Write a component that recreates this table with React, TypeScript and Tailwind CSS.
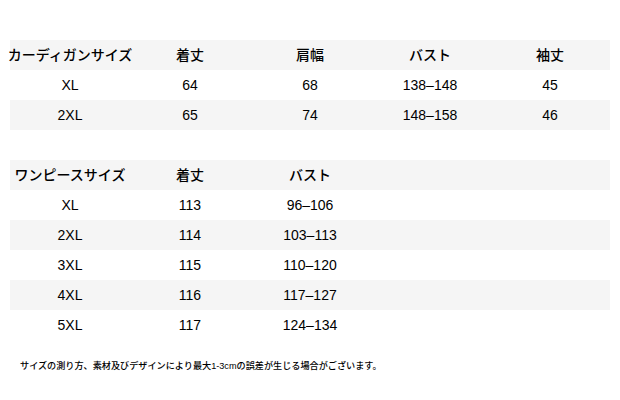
import React from "react";

const font = { fontFamily: '"Liberation Sans", "Noto Sans CJK JP", sans-serif' };

type Row = string[];

function Table({ header, rows }: { header: Row; rows: Row[] }) {
  const all = [header, ...rows];
  return (
    <div className="flex flex-col">
      {all.map((r, i) => (
        <div
          key={i}
          className={`grid grid-cols-5 h-[30px] items-center ${i % 2 === 0 ? "bg-[#f5f5f5]" : "bg-white"}`}
        >
          {[0, 1, 2, 3, 4].map((c) => (
            <div key={c} className="flex justify-center text-[14px] font-medium text-black whitespace-nowrap">
              {r[c] ?? ""}
            </div>
          ))}
        </div>
      ))}
    </div>
  );
}

export default function App() {
  return (
    <div className="w-[620px] h-[400px] bg-white" style={font}>
      <div className="pt-[40px] px-[10px]">
        <Table
          header={["カーディガンサイズ", "着丈", "肩幅", "バスト", "袖丈"]}
          rows={[
            ["XL", "64", "68", "138–148", "45"],
            ["2XL", "65", "74", "148–158", "46"],
          ]}
        />
        <div className="h-[30px]" />
        <Table
          header={["ワンピースサイズ", "着丈", "バスト"]}
          rows={[
            ["XL", "113", "96–106"],
            ["2XL", "114", "103–113"],
            ["3XL", "115", "110–120"],
            ["4XL", "116", "117–127"],
            ["5XL", "117", "124–134"],
          ]}
        />
        <div className="pt-[20px] pl-[10px] text-[9.15px] leading-[12px] font-medium text-black">
          サイズの測り方、素材及びデザインにより最大1-3cmの誤差が生じる場合がございます。
        </div>
      </div>
    </div>
  );
}
